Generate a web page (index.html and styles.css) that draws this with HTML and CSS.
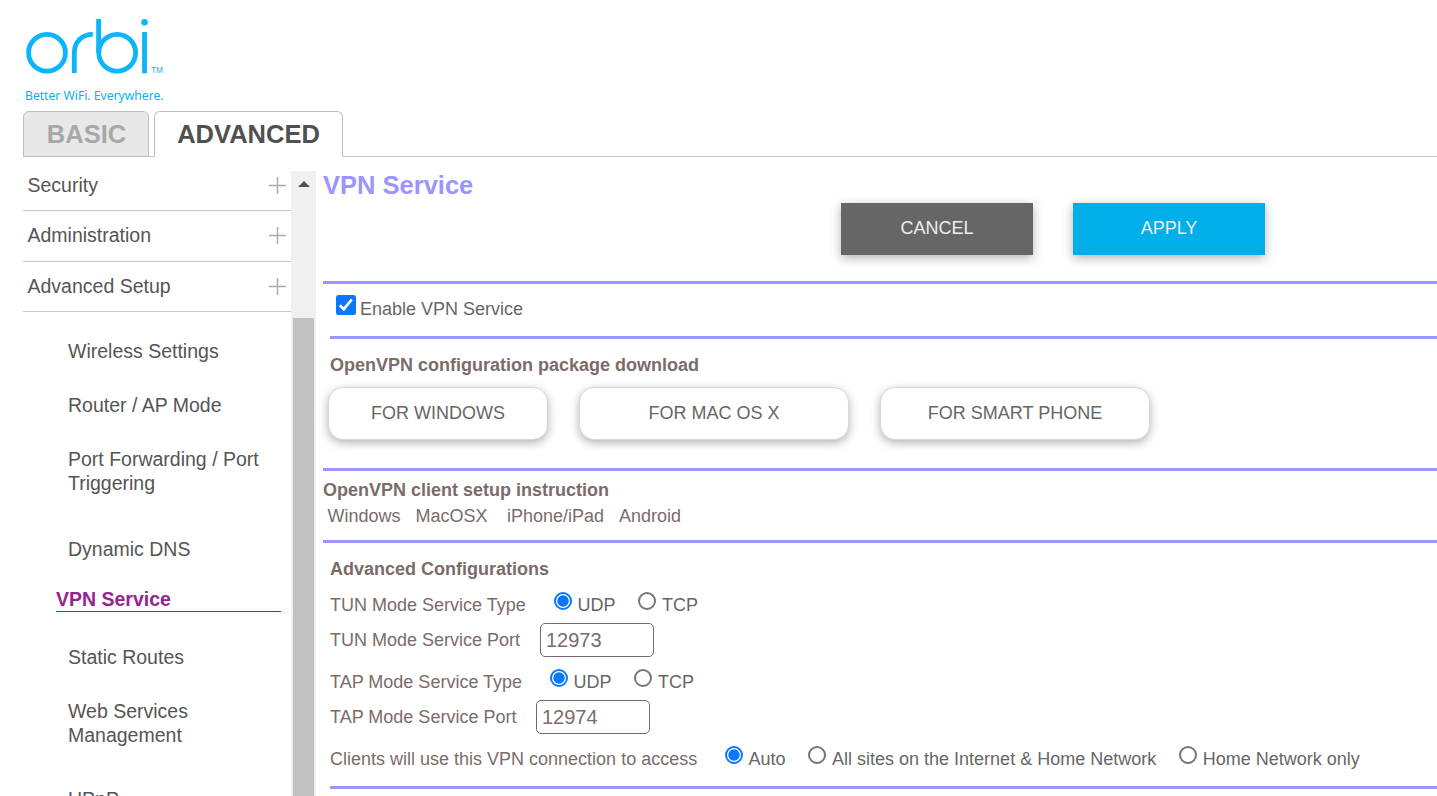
FILE: index.html
```html
<!DOCTYPE html>
<html lang="en">
<head>
<meta charset="utf-8">
<title>Orbi - VPN Service</title>
<link rel="stylesheet" href="styles.css">
</head>
<body>
<header class="header">
  <svg class="logo" width="180" height="111" viewBox="0 0 180 111" role="img" aria-label="orbi">
    <g class="logo-strokes">
      <circle cx="47" cy="52.7" r="18.4"/>
      <path d="M74.3 73V52.7C74.3 42 82 34.3 92.8 34.3"/>
      <path d="M98.600 19V52.700"/>
      <circle cx="117.2" cy="52.7" r="18.4"/>
      <path d="M144.5 32V73.3"/>
    </g>
    <circle class="logo-fill" cx="144.5" cy="22.3" r="3.3"/>
    <text class="logo-tm" x="151" y="73" textLength="12" lengthAdjust="spacingAndGlyphs">TM</text>
    <text class="logo-tagline" x="25" y="100" textLength="138.5" lengthAdjust="spacingAndGlyphs">Better WiFi. Everywhere.</text>
  </svg>
</header>
<nav class="tabs">
  <a class="tab tab-basic">BASIC</a>
  <a class="tab tab-active">ADVANCED</a>
</nav>
<div class="page">
  <aside class="sidebar">
    <div class="menu">
      <div class="group group-first"><span>Security</span><svg class="plus" viewBox="0 0 17 17"><path d="M0 8.5H17M8.5 0V17"/></svg></div>
      <div class="group"><span>Administration</span><svg class="plus" viewBox="0 0 17 17"><path d="M0 8.5H17M8.5 0V17"/></svg></div>
      <div class="group group-last"><span>Advanced Setup</span><svg class="plus" viewBox="0 0 17 17"><path d="M0 8.5H17M8.5 0V17"/></svg></div>
      <div class="submenu">
        <a class="item">Wireless Settings</a>
        <a class="item">Router / AP Mode</a>
        <a class="item item-ports">Port Forwarding / Port Triggering</a>
        <a class="item item-dns">Dynamic DNS</a>
        <a class="item item-active">VPN Service</a>
        <a class="item">Static Routes</a>
        <a class="item item-web">Web Services Management</a>
        <a class="item">UPnP</a>
      </div>
    </div>
    <div class="scrollbar">
      <svg class="arrow" viewBox="0 0 12 6"><path d="M0 6L6 0L12 6Z"/></svg>
      <div class="thumb"></div>
    </div>
  </aside>
  <main class="content">
    <h1 class="title">VPN Service</h1>
    <div class="actions">
      <button class="action cancel">CANCEL</button>
      <button class="action apply">APPLY</button>
    </div>
    <hr class="rule">
    <label class="enable">
      <svg class="check" viewBox="0 0 20 20"><rect width="20" height="20" rx="2.5"/><path d="M3.8 10.3L7.8 14.2L15.8 4.5"/></svg>
      <span>Enable VPN Service</span>
    </label>
    <hr class="rule rule-inset">
    <h2 class="subtitle subtitle-package">OpenVPN configuration package download</h2>
    <div class="downloads">
      <button class="download windows">FOR WINDOWS</button>
      <button class="download">FOR MAC OS X</button>
      <button class="download">FOR SMART PHONE</button>
    </div>
    <hr class="rule">
    <h2 class="subtitle subtitle-client">OpenVPN client setup instruction</h2>
    <div class="links">
      <a class="link-windows">Windows</a><a class="link-mac">MacOSX</a><a class="link-ios">iPhone/iPad</a><a>Android</a>
    </div>
    <hr class="rule">
    <h2 class="subtitle subtitle-advanced">Advanced Configurations</h2>
    <div class="row row-type">
      <span class="tun-type">TUN Mode Service Type</span>
      <label class="option"><input class="radio" type="radio" name="tun" checked>UDP</label>
      <label class="option"><input class="radio" type="radio" name="tun">TCP</label>
    </div>
    <div class="row row-port">
      <span class="tun-port">TUN Mode Service Port</span>
      <input class="port" type="text" value="12973">
    </div>
    <div class="row row-type">
      <span class="tap-type">TAP Mode Service Type</span>
      <label class="option"><input class="radio" type="radio" name="tap" checked>UDP</label>
      <label class="option"><input class="radio" type="radio" name="tap">TCP</label>
    </div>
    <div class="row row-port">
      <span class="tap-port">TAP Mode Service Port</span>
      <input class="port" type="text" value="12974">
    </div>
    <div class="row row-access">
      <span class="access">Clients will use this VPN connection to access</span>
      <label class="option"><input class="radio" type="radio" name="access" checked>Auto</label>
      <label class="option"><input class="radio" type="radio" name="access">All sites on the Internet &amp; Home Network</label>
      <label class="option"><input class="radio" type="radio" name="access">Home Network only</label>
    </div>
    <hr class="rule rule-inset">
  </main>
</div>
</body>
</html>
```
FILE: styles.css
```css
* { box-sizing: border-box; }
body {
  margin: 0;
  height: 796px;
  overflow: hidden;
  display: flex;
  flex-direction: column;
  background: #fff;
  color: #666;
  font-family: "Liberation Sans", Arial, sans-serif;
  font-size: 18px;
}
.header { height: 111px; flex: none; }
.logo { display: block; }
.logo-strokes { fill: none; stroke: #0bb5f9; stroke-width: 4.8; }
.logo-fill { fill: #0bb5f9; }
.logo-tm { fill: #0bb5f9; font-size: 8.5px; }
.logo-tagline { fill: #08aef0; font-family: "Noto Sans", sans-serif; font-size: 12.3px; }

.tabs {
  display: flex;
  flex: none;
  gap: 5px;
  height: 46px;
  padding-left: 23px;
  background: linear-gradient(#c4c4c4, #c4c4c4) 23px 100% / 100% 1px no-repeat;
}
.tab {
  width: 126px;
  height: 46px;
  border: 1px solid #bdbdbd;
  border-radius: 6px 6px 0 0;
  background: #e8e8e8;
  color: #a8a8a8;
  font-size: 25.5px;
  font-weight: bold;
  line-height: 44px;
  text-align: center;
}
.tab-basic { padding-left: 1px; }
.tab-active { width: 189px; border-bottom-color: #fff; background: #fff; color: #505050; }

.page { display: flex; flex: 1; min-height: 0; }
.sidebar { display: flex; width: 316px; flex: none; padding-left: 23px; }
.menu { width: 268px; overflow: hidden; color: #555; font-size: 19.5px; line-height: 24px; }
.group {
  display: flex;
  align-items: center;
  justify-content: space-between;
  height: 51px;
  padding: 0 5px 2px 4.5px;
  border-bottom: 1px solid #c8c8c8;
}
.group-first { height: 54px; padding-top: 3px; padding-bottom: 0; }
.group-last { height: 50px; padding-bottom: 1px; }
.plus { width: 17px; height: 17px; stroke: #aaa; stroke-width: 1.5; }
.submenu { display: flex; flex-direction: column; padding: 27px 10px 0 33px; }
.item { display: block; height: 24px; margin: 0 0 30px 12px; }
.item-ports { height: 48px; margin-bottom: 42px; }
.item-dns { margin-bottom: 26px; }
.item-active {
  margin: 0 0 33px;
  height: 25px;
  border-bottom: 1px solid #952490;
  color: #952490;
  font-weight: bold;
}
.item-web { height: 48px; width: 150px; margin-bottom: 40px; }
.scrollbar {
  display: flex;
  flex-direction: column;
  align-items: center;
  width: 25px;
  margin-top: 14px;
  padding-top: 10px;
  background: #f0f0f0;
}
.arrow { width: 12px; height: 6px; flex: none; fill: #505050; }
.thumb { width: 21px; flex: 1; margin-top: 131px; background: #c1c1c1; }

.content { flex: 1; min-width: 0; margin-left: 7px; }
.title { height: 46px; margin: 0; padding-top: 13px; color: #9c95ff; font-size: 25.5px; line-height: 30px; }
.actions { display: flex; gap: 40px; height: 78px; padding-left: 518px; }
.action {
  width: 192px;
  height: 52px;
  padding: 0 0 2px;
  border: 0;
  color: #eee;
  font: 18px "Liberation Sans", Arial, sans-serif;
  box-shadow: 0 3px 10px rgba(0, 0, 0, .3);
}
.cancel { background: #666; }
.apply { background: #00aeea; }
.rule { height: 3px; margin: 0; border: 0; background: #9c95ff; }
.rule-inset { margin-left: 7px; }
.enable { display: flex; gap: 4px; height: 52px; padding: 11px 0 0 13px; line-height: 28px; }
.check { width: 20px; height: 20px; fill: #0b76ff; }
.check path { fill: none; stroke: #fff; stroke-width: 2.7; }
.subtitle { margin: 0; color: #7a6c68; font-size: 18px; line-height: 24px; }
.subtitle-package { height: 48px; padding: 14px 0 0 7px; }
.downloads { display: flex; gap: 31px; height: 81px; padding-left: 5px; }
.download {
  width: 270px;
  height: 53px;
  padding: 0 0 1px;
  border: 1px solid #d8d8d8;
  border-radius: 15px;
  background: #fff;
  color: #666;
  font: 18px "Liberation Sans", Arial, sans-serif;
  box-shadow: 0 3px 10px rgba(0, 0, 0, .3);
}
.windows { width: 220px; }
.subtitle-client { height: 33px; padding-top: 7px; }
.links { display: flex; height: 36px; padding-left: 4.5px; line-height: 24px; color: #7a6c68; }
.link-windows { width: 88px; }
.link-mac { width: 91.5px; }
.link-ios { width: 112px; }
.subtitle-advanced { height: 42px; padding: 14px 0 0 7px; }
.row { display: flex; align-items: center; padding-left: 7px; color: #7a6c68; white-space: nowrap; }
.row-type { height: 38px; padding-top: 1px; }
.row-port { height: 34px; }
.row-port > span { padding-top: 1px; }
.row-port + .row-type { height: 43px; padding-top: 6px; }
.row-access { height: 52px; padding-bottom: 2px; }
.tun-type { width: 223.5px; padding-top: 1px; }
.tun-port { width: 210px; }
.tap-type { width: 219.5px; padding-top: 1px; }
.tap-port { width: 206px; }
.access { width: 394.5px; }
.option { display: flex; align-items: center; margin-right: 22.5px; color: #666; }
.row-type .option { padding-top: 1px; }
.radio {
  appearance: none;
  width: 18px;
  height: 18px;
  margin: 0 6px 8px 0;
  border: 2px solid #767676;
  border-radius: 50%;
  background: #fff;
}
.radio:checked { border-color: #0b76ff; background: radial-gradient(circle, #0b76ff 5.3px, #fff 6px); }
.port {
  width: 114px;
  height: 34px;
  padding: 0 5px;
  border: 1px solid #766b68;
  border-radius: 5px;
  background: #fff;
  color: #7a6c68;
  font: 20px "Liberation Sans", Arial, sans-serif;
}
```
